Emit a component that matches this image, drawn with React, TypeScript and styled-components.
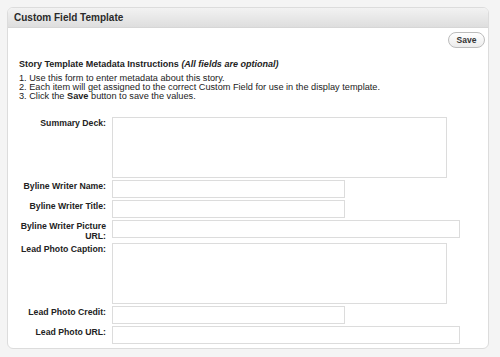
import React from "react";
import styled, { createGlobalStyle } from "styled-components";

const Global = createGlobalStyle`
  html, body { margin: 0; padding: 0; background: #f4f4f4; }
  body { font-family: "Liberation Sans", Arial, sans-serif; color: #222; }
  * { box-sizing: border-box; }
`;

const Page = styled.div`
  padding: 7px 11px 10px 7px;
  width: 500px;
  height: 357px;
`;

const Panel = styled.div`
  width: 482px;
  border: 1px solid #dcdcdc;
  border-radius: 6px;
  background: #fff;
  overflow: hidden;
`;

const Header = styled.div`
  height: 20px;
  background: linear-gradient(#f2f2f2, #dedede);
  border-bottom: 1px solid #d6d6d6;
  display: flex;
  align-items: center;
  padding-left: 6px;
  font-weight: bold;
  font-size: 10px;
  color: #2a2a2a;
`;

const Body = styled.div`
  padding: 4px 3px 4px 4px;
`;

const Toolbar = styled.div`
  display: flex;
  justify-content: flex-end;
`;

const SaveButton = styled.button`
  width: 37px;
  height: 16px;
  border: 1px solid #bcbcbc;
  border-radius: 8px;
  background: linear-gradient(#ffffff, #ececec);
  font-family: "Liberation Sans", Arial, sans-serif;
  font-size: 8.5px;
  font-weight: bold;
  color: #333;
  padding: 0;
  line-height: 14px;
`;

const Heading = styled.div`
  margin: 11px 0 0 7px;
  font-size: 9px;
  font-weight: bold;
  line-height: 11px;
  em { font-style: italic; }
`;

const Steps = styled.div`
  margin: 4px 0 0 7px;
  font-size: 9.2px;
  line-height: 9px;
  b { font-weight: bold; }
`;

const Form = styled.div`
  margin-top: 16px;
  display: grid;
  grid-template-columns: 96px 1fr;
  column-gap: 4px;
  row-gap: 2px;
`;

const Label = styled.label`
  text-align: right;
  font-size: 8.7px;
  font-weight: bold;
  line-height: 9.5px;
  padding: 2px 2px 0 0;
`;

const Field = styled.div<{ $w: number; $h: number }>`
  width: ${(p) => p.$w}px;
  height: ${(p) => p.$h}px;
  border: 1px solid #dcdcdc;
  background: #fff;
`;

const fields: { label: string; w: number; h: number }[] = [
  { label: "Summary Deck:", w: 335, h: 61 },
  { label: "Byline Writer Name:", w: 233, h: 18 },
  { label: "Byline Writer Title:", w: 233, h: 18 },
  { label: "Byline Writer Picture URL:", w: 348, h: 18 },
  { label: "Lead Photo Caption:", w: 335, h: 61 },
  { label: "Lead Photo Credit:", w: 233, h: 18 },
  { label: "Lead Photo URL:", w: 348, h: 18 },
];

export default function App() {
  return (
    <Page>
      <Global />
      <Panel>
        <Header>Custom Field Template</Header>
        <Body>
          <Toolbar>
            <SaveButton>Save</SaveButton>
          </Toolbar>
          <Heading>
            Story Template Metadata Instructions <em>(All fields are optional)</em>
          </Heading>
          <Steps>
            1. Use this form to enter metadata about this story.
            <br />
            2. Each item will get assigned to the correct Custom Field for use in the display template.
            <br />
            3. Click the <b>Save</b> button to save the values.
          </Steps>
          <Form>
            {fields.map((f) => (
              <React.Fragment key={f.label}>
                <Label>{f.label}</Label>
                <Field $w={f.w} $h={f.h} />
              </React.Fragment>
            ))}
          </Form>
        </Body>
      </Panel>
    </Page>
  );
}
